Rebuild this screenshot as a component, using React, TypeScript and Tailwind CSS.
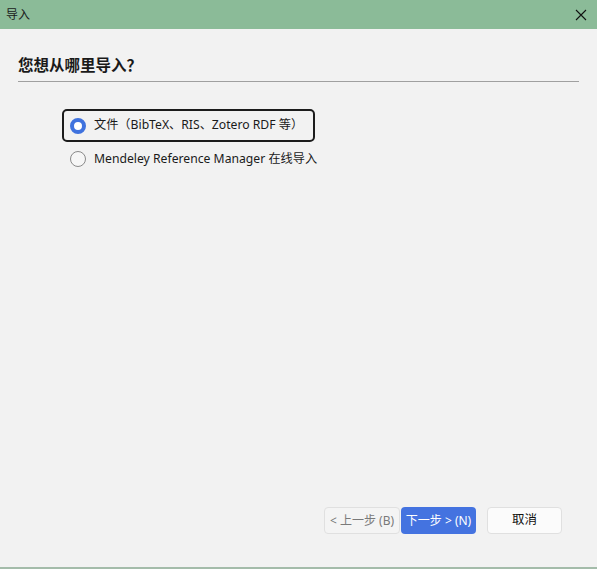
import React from "react";

export default function App() {
  const font = { fontFamily: '"Noto Sans", "Noto Sans CJK SC", sans-serif' };
  return (
    <div className="w-[597px] h-[569px] bg-[#f2f2f2] flex flex-col overflow-hidden text-[#1a1a1a]" style={font}>
      <div className="h-[29px] bg-[#8bbb98] flex items-center justify-between pl-[6px] pr-[9px] shrink-0">
        <span className="text-[12px] leading-none">导入</span>
        <svg width="12" height="12" viewBox="0 0 12 12" className="mr-[1px]">
          <path d="M1 1 L11 11 M11 1 L1 11" stroke="#111" strokeWidth="1.1" />
        </svg>
      </div>
      <div className="flex-1 flex flex-col">
        <div className="mx-[18px] mt-[26px] pb-[6px] border-b border-[#a0a0a0]">
          <h1 className="text-[15.5px] font-bold leading-[20px]">您想从哪里导入？</h1>
        </div>
        <div className="ml-[62px] mt-[27px] flex flex-col">
          <div className="w-[253px] h-[33px] border-2 border-[#1c1c1c] rounded-[5px] flex items-center pl-[6px]">
            <span className="w-[16px] h-[16px] rounded-full border-[4px] border-[#3f72de] bg-white shrink-0" />
            <span className="ml-[8px] text-[12.2px] leading-none whitespace-nowrap">文件（BibTeX、RIS、Zotero RDF 等）</span>
          </div>
          <div className="h-[32px] flex items-center pl-[8px] mt-[1px]">
            <span className="w-[16px] h-[16px] rounded-full border border-[#8a8a8a] bg-[#f6f6f6] shrink-0" />
            <span className="ml-[8px] text-[12.2px] leading-none whitespace-nowrap">Mendeley Reference Manager 在线导入</span>
          </div>
        </div>
        <div className="flex-1" />
        <div className="flex items-center pl-[324px] mb-[33px]">
          <button className="w-[76px] h-[27px] rounded-[4px] border border-[#e0e0e0] bg-[#f4f4f4] text-[#7a7a7a] text-[12px] leading-none">&lt; 上一步 (B)</button>
          <button className="ml-[1px] w-[75px] h-[27px] rounded-[4px] bg-[#4473e0] text-white text-[12px] leading-none">下一步 &gt; (N)</button>
          <button className="ml-[11px] w-[75px] h-[27px] rounded-[4px] border border-[#e0e0e0] bg-[#fbfbfb] text-[#111] text-[12.5px] leading-none">取消</button>
        </div>
      </div>
      <div className="h-[2px] bg-[#a4bcaa] shrink-0" />
    </div>
  );
}
